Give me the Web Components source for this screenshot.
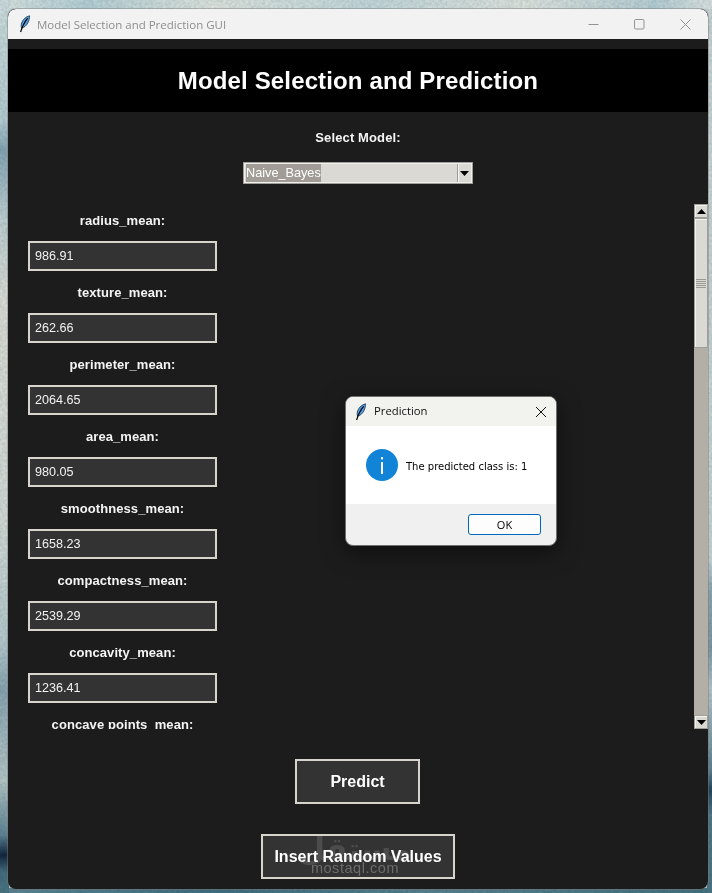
<!DOCTYPE html>
<html lang="en"><head><meta charset="utf-8"><title>Model Selection and Prediction GUI</title>
<style>
html,body{margin:0;padding:0;height:893px;overflow:hidden;background:#c9d3d2}
</style></head><body>
<template id="feather"><svg width="12" height="18" viewBox="0 0 12 18" aria-hidden="true"><path d="M10.6.8C7 1.6 3.8 4.4 2.6 8 2 9.8 2 11.6 2.6 13.2 5 12.6 7.6 10.6 9 7.6 10 5.4 10.6 3 10.6.8Z" fill="#4f9fe0" stroke="#16324a" stroke-width=".8"/><path d="M8.6 3.4C6 6.4 3.6 10.6 1.6 17" fill="none" stroke="#000" stroke-width="1.2"/></svg></template>

<script>
const feather=()=>document.getElementById('feather').innerHTML;
function def(name,css,html){
  customElements.define(name,class extends HTMLElement{
    connectedCallback(){
      if(this.shadowRoot)return;
      const r=this.attachShadow({mode:'open'});
      r.innerHTML='<style>'+css+'</style>'+(typeof html==='function'?html(this):html);
    }
  });
}
def('desk-top',`:host{position:absolute;inset:0;display:block;overflow:hidden;
 background:
  linear-gradient(180deg,transparent 0,transparent 560px,#8ea5ae 590px,#7f98a3 650px,#b9c7c8 690px,#5f8190 770px,#24475c 790px,#4f7886 815px,#4a7583 893px) right/5px 100% no-repeat,
  linear-gradient(180deg,#cfdcdc 0,#b5cbd0 120px,#86a5b3 150px,#bccccf 215px,#dcdcd3 300px,#d3d9d4 520px,#b7c8cb 640px,#8aa4af 690px,#b6c5c6 780px,#5f8493 835px,#12263c 855px,#456c7c 872px,#4a7583 893px) left/9px 100% no-repeat,
  linear-gradient(90deg,#d9e2df,#b7cfd4 12%,#dfe3dd 30%,#c5d7d9 52%,#dfe2dc 74%,#b7cdd2 92%,#dde3e0) top/100% 9px no-repeat,
  linear-gradient(90deg,#5e8592,#3f6e7f 30%,#587f8c 60%,#47717f 100%) bottom/100% 5px no-repeat,
  #c9d3d2}
 svg{position:absolute;inset:0;opacity:.28;mix-blend-mode:multiply}`,
 `<svg width="712" height="893"><filter id="n"><feTurbulence type="fractalNoise" baseFrequency=".35" numOctaves="3" seed="4"/><feColorMatrix values="0 0 0 0 .2 0 0 0 0 .35 0 0 0 0 .42 1.6 0 0 0 -.35"/></filter><rect width="712" height="893" filter="url(#n)"/></svg>`);
def('app-titlebar',`:host{display:flex;align-items:center;height:30px;background:#f2f2f2;color:#8e8e8e;font:11.5px "Open Sans",sans-serif;border-radius:8px 8px 0 0;padding-left:11px;flex:none}
 svg{display:block}.t{margin-left:6px;flex:1;white-space:nowrap}
 .c{width:46px;height:30px;display:flex;align-items:center;justify-content:center}`,
 ()=>feather()+`<span class="t"><slot></slot></span>
 <span class="c"><svg width="11" height="11" viewBox="0 0 11 11"><path d="M.5 5.5h10" stroke="#8e9496" fill="none"/></svg></span>
 <span class="c"><svg width="11" height="11" viewBox="0 0 11 11"><rect x=".5" y=".5" width="9.5" height="9.5" rx="1.2" stroke="#8e9496" fill="none"/></svg></span>
 <span class="c"><svg width="11" height="11" viewBox="0 0 11 11"><path d="M.5.5l10 10M10.5.5l-10 10" stroke="#8e9496" fill="none"/></svg></span>`);
def('app-header',`:host{display:block;height:63px;margin-top:10px;background:#000;color:#fff;text-align:center;font:bold 24px/63px "Liberation Sans",sans-serif;letter-spacing:.14px;flex:none}`,'<slot></slot>');
def('model-label',`:host{display:block;font:bold 13px/20px "Liberation Sans",sans-serif;letter-spacing:.12px;color:#f4f4f4;text-align:center;margin-top:16px;height:20px;flex:none}`,'<slot></slot>');
def('model-select',`:host{display:flex;width:230px;height:22px;box-sizing:border-box;margin:14px auto 0;background:#dbd9d3;border:1px solid #a09e98;box-shadow:inset 1px 1px 0 #f1f0ec,inset -1px -1px 0 #f1f0ec;font:12.7px "Liberation Sans",sans-serif;color:#fff;align-items:center;padding:2px 1px 2px 2px;flex:none}
 .v{flex:1}.v span{background:#a19d96;display:inline-block;line-height:18px;height:18px}
 .b{width:13px;height:18px;background:#dbd9d3;border-left:1px solid #a09e98;box-shadow:inset 1px 0 0 #f4f3ef;display:flex;align-items:center;justify-content:center}`,
 `<div class="v"><span><slot></slot></span></div><div class="b"><svg width="9" height="5" viewBox="0 0 9 5"><path d="M0 0h9L4.5 5Z" fill="#000"/></svg></div>`);
def('field-row',`:host{display:block;width:189px;margin-left:20px;color:#fff;flex:none}
 .l{font:bold 13px/32px "Liberation Sans",sans-serif;letter-spacing:.08px;text-align:center;height:30px;margin-bottom:6px;color:#f4f4f4;white-space:nowrap}
 .i{box-sizing:border-box;height:30px;background:#333;border:2px solid #d6d4cc;font:12.6px/27px "Liberation Sans",sans-serif;padding-left:5px;color:#f2f2f2}`,
 (h)=>`<div class="l">${h.getAttribute('label')}</div>`+(h.hasAttribute('value')?`<div class="i">${h.getAttribute('value')}</div>`:''));
def('tk-scrollbar',`:host{display:flex;flex-direction:column;width:14px;height:525px;box-sizing:border-box;background:#b3afa7;flex:none}
 .a{height:14px;background:#dbd9d3;box-sizing:border-box;border:1px solid #a09e98;box-shadow:inset 1px 1px 0 #f4f3ef;display:flex;align-items:center;justify-content:center;flex:none}
 .t{height:130px;background:#dbd9d3;box-sizing:border-box;border:1px solid #a09e98;box-shadow:inset 1px 1px 0 #f4f3ef;display:flex;align-items:center;justify-content:center;flex:none}
 .g{width:10px;height:9px;background:repeating-linear-gradient(180deg,#9a9890 0 1px,#dbd9d3 1px 2px)}
 .s{flex:1}`,
 `<div class="a"><svg width="9" height="5" viewBox="0 0 9 5"><path d="M0 5h9L4.5 0Z" fill="#000"/></svg></div><div class="t"><div class="g"></div></div><div class="s"></div><div class="a"><svg width="9" height="5" viewBox="0 0 9 5"><path d="M0 0h9L4.5 5Z" fill="#000"/></svg></div>`);
def('scroll-pane',`:host{display:flex;height:525px;margin-top:20px;overflow:hidden;flex:none}
 .c{flex:1;display:flex;flex-direction:column;gap:6px;overflow:hidden;height:524px;padding-top:1px}`,
 `<div class="c"><slot></slot></div><slot name="bar"></slot>`);
def('tk-button',`:host{display:flex;height:45px;box-sizing:border-box;background:#333;border:2px solid #d6d4cc;color:#fff;font:bold 16px "Liberation Sans",sans-serif;align-items:center;justify-content:center;flex:none}
 span{position:relative;z-index:2}`,'<span><slot></slot></span>');
def('info-dialog',`:host{position:absolute;z-index:5;width:212px;height:150px;box-sizing:border-box;border-radius:8px;background:#f0f0f0;border:1px solid #6f6f6f;box-shadow:0 6px 22px rgba(0,0,0,.5);overflow:hidden;display:flex;flex-direction:column;color:#000}
 .h{height:29px;background:#f2f2ee;display:flex;align-items:center;padding-left:9px;font:11.3px "Open Sans",sans-serif;color:#111;flex:none}
 .h .t{margin-left:7px;flex:1;position:relative;top:-1px}.h .x{width:30px;display:flex;justify-content:center}
 .b{height:78px;background:#fff;display:flex;align-items:center;padding-left:20px;font:10px "DejaVu Sans",sans-serif;flex:none}
 .b .m{margin:2px 0 0 8px;white-space:nowrap}
 .f{flex:1;display:flex;justify-content:flex-end;align-items:center;padding-right:15px}
 .ok{width:73px;height:21px;box-sizing:border-box;background:#fdfdfd;border:1px solid #0067c0;border-radius:3px;text-align:center;font:11px/19px "Open Sans",sans-serif}`,
 ()=>`<div class="h">${feather()}<span class="t">Prediction</span><span class="x"><svg width="12" height="12" viewBox="0 0 12 12"><path d="M1 1l10 10M11 1L1 11" stroke="#111" fill="none"/></svg></span></div>
 <div class="b"><svg width="32" height="32" viewBox="0 0 32 32"><circle cx="16" cy="16" r="16" fill="#1284d8"/><rect x="15" y="13" width="2" height="12" fill="#fff"/><rect x="15" y="8" width="2" height="2.4" fill="#fff"/></svg><span class="m"><slot></slot></span></div>
 <div class="f"><div class="ok">OK</div></div>`);
def('app-window',`:host{display:flex;flex-direction:column;position:absolute;left:8px;top:9px;width:700px;height:880px;background:#1c1c1c;border-radius:8px;overflow:hidden;box-shadow:0 0 0 1px rgba(120,120,120,.45)}`,
 `<slot></slot>`);
def('water-mark',`:host{position:absolute;z-index:1;left:295px;top:830px;width:120px;text-align:center;color:#6c6c6c;font:14.5px/14px "Liberation Sans",sans-serif;letter-spacing:.55px;pointer-events:none}
 .a{font:bold 31px/38px "DejaVu Sans",sans-serif;color:#4c4c4c;letter-spacing:0;height:31px}`,
 `<div class="a" dir="rtl" lang="ar">مستقل</div><div>mostaql.com</div>`);
</script>
<desk-top></desk-top>
<app-window>
  <app-titlebar>Model Selection and Prediction GUI</app-titlebar>
  <app-header>Model Selection and Prediction</app-header>
  <model-label>Select Model:</model-label>
  <model-select>Naive_Bayes</model-select>
  <scroll-pane>
    <field-row label="radius_mean:" value="986.91"></field-row>
    <field-row label="texture_mean:" value="262.66"></field-row>
    <field-row label="perimeter_mean:" value="2064.65"></field-row>
    <field-row label="area_mean:" value="980.05"></field-row>
    <field-row label="smoothness_mean:" value="1658.23"></field-row>
    <field-row label="compactness_mean:" value="2539.29"></field-row>
    <field-row label="concavity_mean:" value="1236.41"></field-row>
    <field-row label="concave points_mean:"></field-row>
    <tk-scrollbar slot="bar"></tk-scrollbar>
  </scroll-pane>
  <tk-button style="width:125px;margin:30px 0 0 287px">Predict</tk-button>
  <tk-button style="width:194px;margin:30px 0 0 253px">Insert Random Values</tk-button>
</app-window>
<water-mark></water-mark>
<info-dialog style="left:345px;top:396px">The predicted class is: 1</info-dialog>
</body></html>
